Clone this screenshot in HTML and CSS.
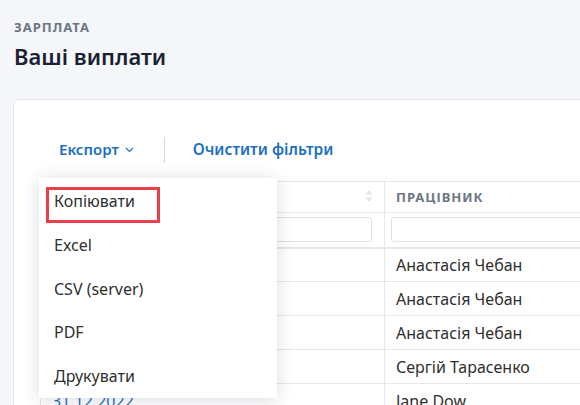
FILE: index.html
```html
<!DOCTYPE html>
<html lang="uk">
<head>
<meta charset="utf-8">
<title>Ваші виплати</title>
<link rel="stylesheet" href="styles.css">
</head>
<body>
<div class="page">
  <div class="eyebrow">Зарплата</div>
  <h1 class="title">Ваші виплати</h1>
  <div class="card">
    <div class="toolbar">
      <button class="tool-btn">Експорт <svg class="chev" width="9" height="6" viewBox="0 0 9 6"><path d="M1 1l3.5 3.5L8 1" fill="none" stroke="#1c6fc1" stroke-width="1.1"/></svg></button>
      <span class="sep"></span>
      <button class="tool-btn">Очистити фільтри</button>
      <ul class="menu">
        <li class="menu-item marked">Копіювати</li>
        <li class="menu-item">Excel</li>
        <li class="menu-item">CSV (server)</li>
        <li class="menu-item">PDF</li>
        <li class="menu-item">Друкувати</li>
      </ul>
    </div>
    <table class="grid">
      <thead>
        <tr class="head-row">
          <th class="col-date">Дата <svg class="sort" width="8" height="14" viewBox="0 0 8 14"><path d="M4 1L7.5 5.5H0.5Z M4 13L0.5 8.5H7.5Z" fill="#e3e5e9"/></svg></th>
          <th class="col-emp">Працівник</th>
        </tr>
        <tr class="filter-row">
          <th><input class="filter" type="text"></th>
          <th><input class="filter" type="text"></th>
        </tr>
      </thead>
      <tbody>
        <tr><td><a class="link">31.01.2023</a></td><td>Анастасія Чебан</td></tr>
        <tr><td><a class="link">28.02.2023</a></td><td>Анастасія Чебан</td></tr>
        <tr><td><a class="link">31.03.2023</a></td><td>Анастасія Чебан</td></tr>
        <tr><td><a class="link">31.01.2023</a></td><td>Сергій Тарасенко</td></tr>
        <tr><td><a class="link">31.12.2022</a></td><td>Jane Dow</td></tr>
      </tbody>
    </table>
  </div>
</div>
</body>
</html>
```

FILE: styles.css
```css
html, body {
  margin: 0;
  padding: 0;
  height: 100%;
  overflow: hidden;
}
body {
  background: #f4f6fa;
  font-family: "Noto Sans", "Open Sans", sans-serif;
  color: #333;
}
.page {
  padding: 19px 0 0 13px;
}
.eyebrow {
  font-size: 13px;
  font-weight: 700;
  letter-spacing: 1px;
  text-transform: uppercase;
  color: #6c7684;
  margin-left: 1px;
  line-height: 17px;
}
.title {
  margin: 6px 0 0 1px;
  font-size: 22px;
  font-weight: 600;
  line-height: 28px;
  color: #1b2130;
}
.card {
  margin-top: 29px;
  width: 720px;
  height: 400px;
  background: #fff;
  border: 1px solid #e4e7ec;
  border-radius: 6px;
  padding: 0 0 0 26px;
  box-sizing: border-box;
}
.toolbar {
  position: relative;
  display: flex;
  align-items: center;
  height: 81px;
  box-sizing: border-box;
}
.tool-btn {
  background: none;
  border: 0;
  padding: 0;
  margin: 16px 0 0 0;
  font-family: inherit;
  font-size: 15px;
  font-weight: 600;
  color: #1c6fc1;
  display: flex;
  align-items: center;
  gap: 6px;
  cursor: pointer;
}
.tool-btn:first-child {
  margin-left: 19px;
}
.tool-btn:last-of-type {
  font-size: 15.5px;
}
.chev {
  margin-top: 3px;
}
.sep {
  width: 1px;
  height: 26px;
  background: #d5d9df;
  margin: 18px 28px 0 30px;
}
.menu {
  position: absolute;
  left: -1px;
  top: 78px;
  width: 238px;
  margin: 0;
  padding: 2px 0 0 0;
  height: 220px;
  box-sizing: border-box;
  list-style: none;
  background: #fff;
  box-shadow: 0 2px 16px rgba(30, 40, 60, 0.16);
  z-index: 5;
}
.menu-item {
  position: relative;
  height: 43.75px;
  line-height: 43.75px;
  padding-left: 15px;
  font-size: 16px;
  color: #2f2f2f;
}
.menu-item.marked::before {
  content: "";
  position: absolute;
  left: 7px;
  top: 7px;
  width: 114px;
  height: 36px;
  box-sizing: border-box;
  border: 3px solid #e8404a;
}
.grid {
  border-collapse: collapse;
  table-layout: fixed;
  width: 700px;
}
.grid th, .grid td {
  border: 1px solid #e4e7ec;
  text-align: left;
  box-sizing: border-box;
}
.head-row th {
  height: 31px;
  font-size: 13px;
  font-weight: 700;
  letter-spacing: 1px;
  text-transform: uppercase;
  color: #6c7684;
  padding: 0 11px;
}
.col-date {
  width: 344px;
  position: relative;
}
.sort {
  position: absolute;
  right: 11px;
  top: 7px;
}
.filter-row th {
  height: 35px;
  padding: 4px 12px 4px 6px;
  border-bottom: 2px solid #e4e7ec;
}
.filter {
  display: block;
  width: 100%;
  height: 25px;
  box-sizing: border-box;
  border: 1px solid #dde1e6;
  border-radius: 3px;
  background: #fff;
}
.grid td {
  height: 34px;
  padding: 0 11px;
  font-size: 16px;
  color: #2f2f2f;
}
.link {
  color: #2a6fbf;
}
```
